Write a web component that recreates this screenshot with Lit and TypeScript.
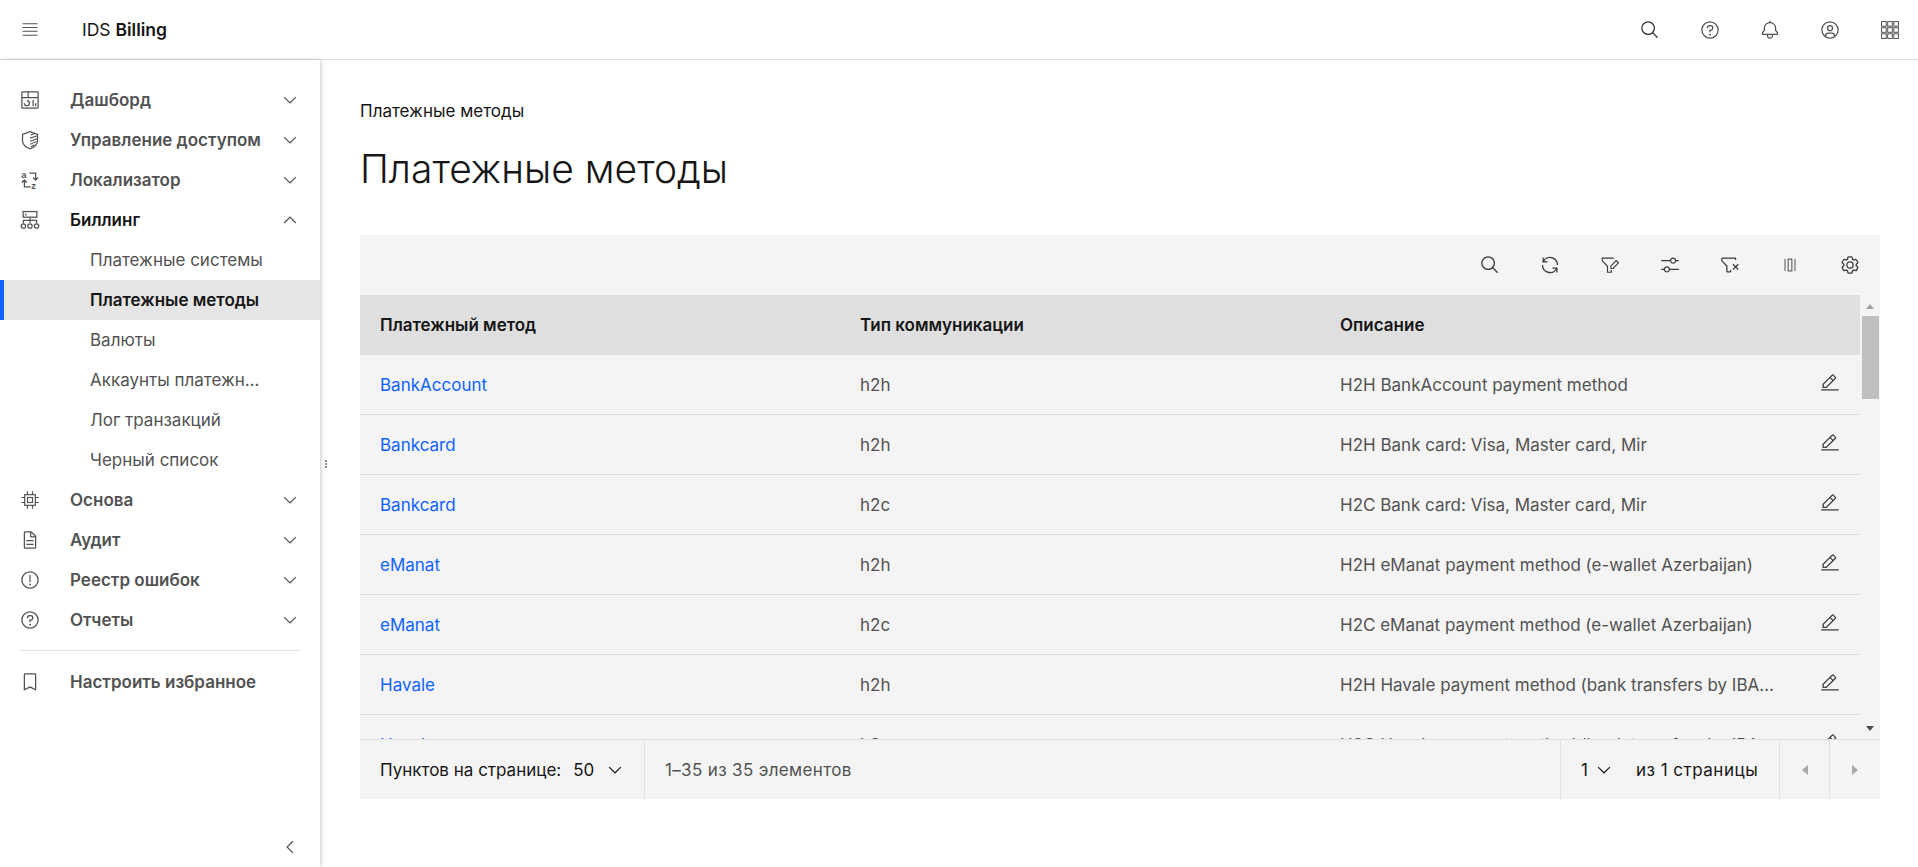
import { LitElement, html, css, svg } from "lit";
import { customElement } from "lit/decorators.js";

const p = (...d: string[]) => d.map((x) => svg`<path d=${x}></path>`);
const ICONS: Record<string, unknown> = {
  search: p("M29 27.586l-7.552-7.552a11.018 11.018 0 1 0-1.414 1.414L27.586 29zM4 13a9 9 0 1 1 9 9 9.01 9.01 0 0 1-9-9z"),
  help: svg`<path d="M16 2a14 14 0 1 0 14 14A14 14 0 0 0 16 2zm0 26a12 12 0 1 1 12-12 12 12 0 0 1-12 12z"></path><circle cx="16" cy="23.5" r="1.5"></circle><path d="M17 8h-1.5a4.49 4.49 0 0 0-4.5 4.5v.5h2v-.5a2.5 2.5 0 0 1 2.5-2.5H17a2.5 2.5 0 0 1 0 5h-2v4.5h2V17a4.5 4.5 0 0 0 0-9z"></path>`,
  bell: p("M28.707 19.293L26 16.586V13a10.014 10.014 0 0 0-9-9.95V1h-2v2.05A10.014 10.014 0 0 0 6 13v3.586l-2.707 2.707A1 1 0 0 0 3 20v3a1 1 0 0 0 1 1h7v.777a5.152 5.152 0 0 0 4.5 5.199A5.006 5.006 0 0 0 21 25v-1h7a1 1 0 0 0 1-1v-3a1 1 0 0 0-.293-.707zM19 25a3 3 0 0 1-6 0v-1h6zm8-3H5v-1.586l2.707-2.707A1 1 0 0 0 8 17v-4a8 8 0 0 1 16 0v4a1 1 0 0 0 .293.707L27 20.414z"),
  user: p("M16 8a5 5 0 1 0 5 5 5 5 0 0 0-5-5zm0 8a3 3 0 1 1 3-3 3.003 3.003 0 0 1-3 3z", "M16 2a14 14 0 1 0 14 14A14.016 14.016 0 0 0 16 2zm-6 24.377V25a3.003 3.003 0 0 1 3-3h6a3.003 3.003 0 0 1 3 3v1.377a11.899 11.899 0 0 1-12 0zm13.993-1.451A5.002 5.002 0 0 0 19 20h-6a5.002 5.002 0 0 0-4.992 4.926 12 12 0 1 1 15.985 0z"),
  switcher: svg`<g fill="none" stroke="currentColor" stroke-width="1.6">${[0, 1, 2].flatMap((r) => [0, 1, 2].map((c) => svg`<rect x=${2.5 + c * 9.8} y=${2.5 + r * 9.8} width="7.4" height="7.4"></rect>`))}</g>`,
  menu: svg`<path d="M4 5h24v1.7H4zM4 11h24v1.7H4zM4 17h24v1.7H4zM4 23.5h24v1.7H4z"></path>`,
  down: p("M16 22L6 12l1.4-1.4 8.6 8.6 8.6-8.6L26 12z"),
  up: p("M16 10l10 10-1.4 1.4-8.6-8.6-8.6 8.6L6 20z"),
  left: p("M10 16L20 6l1.4 1.4-8.6 8.6 8.6 8.6L20 26z"),
  dashboard: p("M24 21h2v5h-2zM20 16h2v10h-2zM11 26a5.006 5.006 0 0 1-5-5h2a3 3 0 1 0 3-3v-2a5 5 0 0 1 0 10z", "M28 2H4a2.002 2.002 0 0 0-2 2v24a2.002 2.002 0 0 0 2 2h24a2.003 2.003 0 0 0 2-2V4a2.002 2.002 0 0 0-2-2zm0 9H14V4h14zM12 4v7H4V4zM4 28V13h24l.002 15z"),
  shield: svg`<g fill="none" stroke="currentColor" stroke-width="2"><path d="M16 2.5 L28 7 V17 C28 23.5 22 27.5 16 30 C10 27.5 4 23.5 4 17 V7 Z"></path><path d="M17 8 L24 5.500M16 13 L27 9.500M16 18 L27.500 14M16 23 L26 18.500M17 27 L23 23.500" stroke-width="1.700"></path></g>`,
  az: svg`<text x="2" y="13" font-size="15" font-family="Liberation Sans, sans-serif">a</text><text x="18" y="30" font-size="15" font-family="Liberation Sans, sans-serif">z</text><g fill="none" stroke="currentColor" stroke-width="2"><path d="M15 5h10v11M21 12l4 4 4-4M17 27H7V16M3 20l4-4 4 4"></path></g>`,
  tree: svg`<g fill="none" stroke="currentColor" stroke-width="2"><rect x="5" y="2.500" width="22" height="9"></rect><path d="M16 11.500v9M5.500 21v-4.500h21V21"></path><circle cx="5.500" cy="25.500" r="3.500"></circle><circle cx="16" cy="25.500" r="3.500"></circle><circle cx="26.500" cy="25.500" r="3.500"></circle></g><rect x="8" y="6" width="2.500" height="2.500"></rect>`,
  chip: svg`<g fill="none" stroke="currentColor" stroke-width="1.9"><rect x="7.500" y="7.500" width="17" height="17"></rect><rect x="12" y="12" width="8" height="8"></rect><path d="M12 2v5.500M20 2v5.500M12 24.500V30M20 24.500V30M2 12h5.500M2 20h5.500M24.500 12H30M24.500 20H30"></path></g>`,
  doc: p("M25.7 9.3l-7-7A.908.908 0 0 0 18 2H8a2.006 2.006 0 0 0-2 2v24a2.006 2.006 0 0 0 2 2h16a2.006 2.006 0 0 0 2-2V10a.908.908 0 0 0-.3-.7zM18 4.4l5.6 5.6H18zM24 28H8V4h8v6a2.006 2.006 0 0 0 2 2h6z", "M10 22h12v2H10zM10 16h12v2H10z"),
  warn: svg`<path d="M16 2a14 14 0 1 0 14 14A14 14 0 0 0 16 2zm0 26a12 12 0 1 1 12-12 12 12 0 0 1-12 12z"></path><path d="M15 8h2v11h-2z"></path><circle cx="16" cy="23" r="1.500"></circle>`,
  bookmark: p("M24 4v22.75l-7.1-3.59-.9-.45-.9.45L8 26.75V4h16m0-2H8a2 2 0 0 0-2 2v26l10-5 10 5V4a2 2 0 0 0-2-2z"),
  renew: p("M12 10H6.78A11 11 0 0 1 27 16h2A13 13 0 0 0 6 7.68V4H4v8h8zM20 22h5.22A11 11 0 0 1 5 16H3a13 13 0 0 0 23 8.32V28h2v-8h-8z"),
  filterEdit: svg`<g fill="none" stroke="currentColor" stroke-width="1.800"><path d="M22 5H3.500v4L12 18v9.500h6V24"></path><path d="M17.500 21.500v-4L26 9l3.500 3.500L21 21.500z"></path></g>`,
  sliders: p("M30 8h-4.1c-.5-2.300-2.500-4-4.900-4s-4.400 1.700-4.900 4H2v2h14.100c.5 2.300 2.500 4 4.900 4s4.400-1.700 4.900-4H30V8zm-9 4c-1.700 0-3-1.300-3-3s1.300-3 3-3 3 1.300 3 3-1.300 3-3 3zM2 24h4.100c.5 2.300 2.500 4 4.900 4s4.400-1.700 4.900-4H30v-2H15.900c-.5-2.300-2.500-4-4.900-4s-4.400 1.700-4.900 4H2v2zm9-4c1.700 0 3 1.300 3 3s-1.300 3-3 3-3-1.300-3-3 1.300-3 3-3z"),
  filterX: p("M30 15.414L28.586 14 25 17.586 21.414 14 20 15.414 23.586 19 20 22.585l1.415 1.415L25 20.414l3.587 3.586L30 22.587 26.414 19 30 15.414z", "M4 4a2 2 0 0 0-2 2v3.170a2 2 0 0 0 .586 1.415L10 18v8a2 2 0 0 0 2 2h4a2 2 0 0 0 2-2v-2h-2v2h-4v-8.830l-.586-.585L4 9.171V6h20v2h2V6a2 2 0 0 0-2-2z"),
  columns: svg`<g fill="none" stroke="currentColor" stroke-width="1.400"><path d="M8 6.500v19M24 6.500v19"></path><rect x="13" y="6.500" width="6" height="19"></rect></g>`,
  gear: p("M27 16.76c0-.25 0-.5 0-.76s0-.51 0-.77l1.920-1.680A2 2 0 0 0 29.300 11l-2.360-4a2 2 0 0 0-1.730-1 2 2 0 0 0-.64.1l-2.430.82a11.350 11.350 0 0 0-1.310-.75l-.51-2.520a2 2 0 0 0-2-1.610h-4.680a2 2 0 0 0-2 1.610l-.51 2.520a11.480 11.480 0 0 0-1.320.75l-2.380-.86A2 2 0 0 0 6.790 6a2 2 0 0 0-1.730 1L2.700 11a2 2 0 0 0 .41 2.510L5 15.240c0 .25 0 .5 0 .76s0 .51 0 .77l-1.920 1.680A2 2 0 0 0 2.700 21l2.360 4a2 2 0 0 0 1.730 1 2 2 0 0 0 .64-.1l2.430-.82a11.350 11.350 0 0 0 1.310.75l.51 2.520a2 2 0 0 0 2 1.610h4.720a2 2 0 0 0 2-1.610l.51-2.520a11.480 11.480 0 0 0 1.320-.75l2.420.82a2 2 0 0 0 .64.1 2 2 0 0 0 1.730-1l2.280-4a2 2 0 0 0-.41-2.510zM25.210 24l-3.430-1.160a8.860 8.860 0 0 1-2.710 1.570L18.360 28h-4.720l-.71-3.550a9.360 9.360 0 0 1-2.700-1.570L6.790 24l-2.360-4 2.720-2.400a8.900 8.900 0 0 1 0-3.130L4.430 12l2.360-4 3.430 1.160a8.860 8.860 0 0 1 2.710-1.570L13.640 4h4.720l.71 3.550a9.360 9.360 0 0 1 2.700 1.570L25.210 8l2.360 4-2.720 2.400a8.900 8.900 0 0 1 0 3.130L27.570 20z", "M16 22a6 6 0 1 1 6-6 5.940 5.940 0 0 1-6 6zm0-10a3.910 3.910 0 0 0-4 4 3.910 3.910 0 0 0 4 4 3.910 3.910 0 0 0 4-4 3.910 3.910 0 0 0-4-4z"),
  edit: p("M2 26h28v2H2zM25.4 9c.8-.8.8-2 0-2.8l-3.6-3.6c-.8-.8-2-.8-2.8 0l-15 15V24h6.4l15-15zm-5-5L24 7.6l-3 3L17.4 7l3-3zM6 22v-3.6l10-10 3.6 3.6-10 10H6z"),
};

const icon = (n: string) => html`<svg class="ic" viewBox="0 0 32 32" fill="currentColor" aria-hidden="true">${ICONS[n]}</svg>`;

const NAV_TOP = [
  { i: "dashboard", t: "Дашборд" },
  { i: "shield", t: "Управление доступом" },
  { i: "az", t: "Локализатор" },
];
const SUBS = ["Платежные системы", "Платежные методы", "Валюты", "Аккаунты платежных систем", "Лог транзакций", "Черный список"];
const NAV_BOTTOM = [
  { i: "chip", t: "Основа" },
  { i: "doc", t: "Аудит" },
  { i: "warn", t: "Реестр ошибок" },
  { i: "help", t: "Отчеты" },
];
const ROWS = [
  ["BankAccount", "h2h", "H2H BankAccount payment method"],
  ["Bankcard", "h2h", "H2H Bank card: Visa, Master card, Mir"],
  ["Bankcard", "h2c", "H2C Bank card: Visa, Master card, Mir"],
  ["eManat", "h2h", "H2H eManat payment method (e-wallet Azerbaijan)"],
  ["eManat", "h2c", "H2C eManat payment method (e-wallet Azerbaijan)"],
  ["Havale", "h2h", "H2H Havale payment method (bank transfers by IBAN numbers in Turkey)"],
  ["Havale", "h2c", "H2C Havale payment method (bank transfers by IBAN numbers in Turkey)"],
];

@customElement("app-root")
export class AppRoot extends LitElement {
  static styles = css`
    :host {
      display: flex;
      flex-direction: column;
      height: 867px;
      overflow: hidden;
      background: #fff;
      font-family: Inter, "Noto Sans", sans-serif;
      font-size: 17px;
      color: #161616;
    }
    .ic { width: 20px; height: 20px; display: block; flex: none; }
    header {
      height: 60px;
      flex: none;
      display: flex;
      align-items: center;
      border-bottom: 1px solid #e0e0e0;
      box-sizing: border-box;
      margin-right: -2px;
    }
    .hbtn { width: 60px; height: 59px; display: flex; align-items: center; justify-content: center; flex: none; color: #525252; }
    .hbtn.dark { color: #393939; }
    .brand { margin-left: 22px; font-size: 17.5px; flex: 1; }
    .brand b { font-weight: 600; }
    .body { flex: 1; display: flex; min-height: 0; position: relative; }
    aside {
      width: 320px;
      flex: none;
      display: flex;
      flex-direction: column;
      padding-top: 20px;
      box-sizing: border-box;
      box-shadow: 1px 0 4px rgba(0, 0, 0, 0.22);
      position: relative;
    }
    .item { height: 40px; display: flex; align-items: center; padding: 0 20px; color: #525252; font-weight: 600; box-sizing: border-box; }
    .item .lbl { margin-left: 30px; flex: 1; white-space: nowrap; }
    .item.open { color: #161616; }
    .item.open .ic:first-child { color: #525252; }
    .item .ic:last-child { color: #525252; }
    .sub { height: 40px; display: flex; align-items: center; padding-left: 90px; padding-right: 54px; color: #525252; box-sizing: border-box; }
    .sub span { overflow: hidden; text-overflow: ellipsis; white-space: nowrap; }
    .sub.active { background: #e5e5e5; color: #161616; font-weight: 600; border-left: 4px solid #0f62fe; padding-left: 86px; }
    .divider { height: 1px; background: #e0e0e0; margin: 10px 20px 11px; }
    .collapse { margin-top: auto; height: 40px; display: flex; align-items: center; justify-content: flex-end; padding-right: 20px; color: #525252; }
    .grip { position: absolute; left: 325px; top: 400px; display: flex; flex-direction: column; gap: 1px; }
    .grip i { width: 2px; height: 2px; background: #8d8d8d; display: block; }
    main { flex: 1; min-width: 0; padding: 40px 38px 0 40px; box-sizing: border-box; }
    .crumb { line-height: 22px; height: 22px; }
    h1 { margin: 23px 0 0; font-size: 39px; font-weight: 300; line-height: 48px; height: 90px; }
    .table { background: #f4f4f4; height: 564px; display: flex; flex-direction: column; }
    .toolbar { height: 60px; flex: none; display: flex; justify-content: flex-end; }
    .tbtn { width: 60px; height: 60px; display: flex; align-items: center; justify-content: center; color: #393939; }
    .scroller { flex: 1; min-height: 0; display: flex; }
    .rows { flex: 1; min-width: 0; overflow: hidden; }
    .row { display: grid; grid-template-columns: 480px 480px 480px 1fr; height: 60px; align-items: center; border-bottom: 1px solid #e0e0e0; box-sizing: border-box; }
    .row.head { background: #dfdfdf; font-weight: 600; border-bottom: none; }
    .cell { padding: 0 20px; overflow: hidden; white-space: nowrap; text-overflow: ellipsis; color: #525252; }
    .head .cell { color: #161616; }
    .cell a { color: #0f62fe; text-decoration: none; }
    .act { display: flex; justify-content: center; color: #393939; margin-top: -4px; }
    .bar { width: 20px; flex: none; display: flex; flex-direction: column; align-items: center; padding-top: 9px; box-sizing: border-box; }
    .tri-up { width: 0; height: 0; border: 4.500px solid transparent; border-top: 0; border-bottom: 5px solid #a3a3a3; }
    .thumb { width: 17px; height: 83px; background: #bfbfbf; margin-top: 7px; margin-left: 1px; }
    .tri-down { width: 0; height: 0; border: 4.500px solid transparent; border-bottom: 0; border-top: 5px solid #505050; margin-top: auto; margin-bottom: 8px; }
    .pager { height: 60px; flex: none; display: flex; align-items: center; border-top: 1px solid #e0e0e0; box-sizing: border-box; padding-right: 1px; }
    .pcell { height: 100%; display: flex; align-items: center; box-sizing: border-box; }
    .per { width: 285px; padding-left: 20px; border-right: 1px solid #e0e0e0; }
    .per .v { margin-left: 12px; }
    .per .ic { margin-left: 11px; }
    .count { flex: 1; padding-left: 20px; color: #525252; letter-spacing: 0.35px; }
    .page { width: 219px; padding-left: 20px; border-left: 1px solid #e0e0e0; }
    .page .ic { margin-left: 6px; }
    .page .of { margin-left: 22px; letter-spacing: 0.5px; }
    .nav { width: 50px; border-left: 1px solid #e0e0e0; justify-content: center; }
    .tl { width: 0; height: 0; border: 5px solid transparent; border-left: 0; border-right: 6px solid #a8a8a8; }
    .tr { width: 0; height: 0; border: 5px solid transparent; border-right: 0; border-left: 6px solid #a8a8a8; }
  `;

  render() {
    return html`
      <header>
        <div class="hbtn">${icon("menu")}</div>
        <div class="brand">IDS <b>Billing</b></div>
        <div class="hbtn dark">${icon("search")}</div>
        <div class="hbtn">${icon("help")}</div>
        <div class="hbtn">${icon("bell")}</div>
        <div class="hbtn">${icon("user")}</div>
        <div class="hbtn">${icon("switcher")}</div>
      </header>
      <div class="body">
        <aside>
          ${NAV_TOP.map((n) => html`<div class="item">${icon(n.i)}<span class="lbl">${n.t}</span>${icon("down")}</div>`)}
          <div class="item open">${icon("tree")}<span class="lbl">Биллинг</span>${icon("up")}</div>
          ${SUBS.map((s, i) => html`<div class="sub ${i === 1 ? "active" : ""}"><span>${s}</span></div>`)}
          ${NAV_BOTTOM.map((n) => html`<div class="item">${icon(n.i)}<span class="lbl">${n.t}</span>${icon("down")}</div>`)}
          <div class="divider"></div>
          <div class="item">${icon("bookmark")}<span class="lbl">Настроить избранное</span></div>
          <div class="collapse">${icon("left")}</div>
        </aside>
        <div class="grip"><i></i><i></i><i></i></div>
        <main>
          <div class="crumb">Платежные методы</div>
          <h1>Платежные методы</h1>
          <div class="table">
            <div class="toolbar">
              ${["search", "renew", "filterEdit", "sliders", "filterX", "columns", "gear"].map((n) => html`<div class="tbtn">${icon(n)}</div>`)}
            </div>
            <div class="scroller">
              <div class="rows">
                <div class="row head">
                  <div class="cell">Платежный метод</div>
                  <div class="cell">Тип коммуникации</div>
                  <div class="cell">Описание</div>
                </div>
                ${ROWS.map(
                  (r) => html`<div class="row">
                    <div class="cell"><a>${r[0]}</a></div>
                    <div class="cell">${r[1]}</div>
                    <div class="cell">${r[2]}</div>
                    <div class="act">${icon("edit")}</div>
                  </div>`,
                )}
              </div>
              <div class="bar"><div class="tri-up"></div><div class="thumb"></div><div class="tri-down"></div></div>
            </div>
            <div class="pager">
              <div class="pcell per">Пунктов на странице:<span class="v">50</span>${icon("down")}</div>
              <div class="pcell count">1–35 из 35 элементов</div>
              <div class="pcell page">1${icon("down")}<span class="of">из 1 страницы</span></div>
              <div class="pcell nav"><div class="tl"></div></div>
              <div class="pcell nav"><div class="tr"></div></div>
            </div>
          </div>
        </main>
      </div>
    `;
  }
}
